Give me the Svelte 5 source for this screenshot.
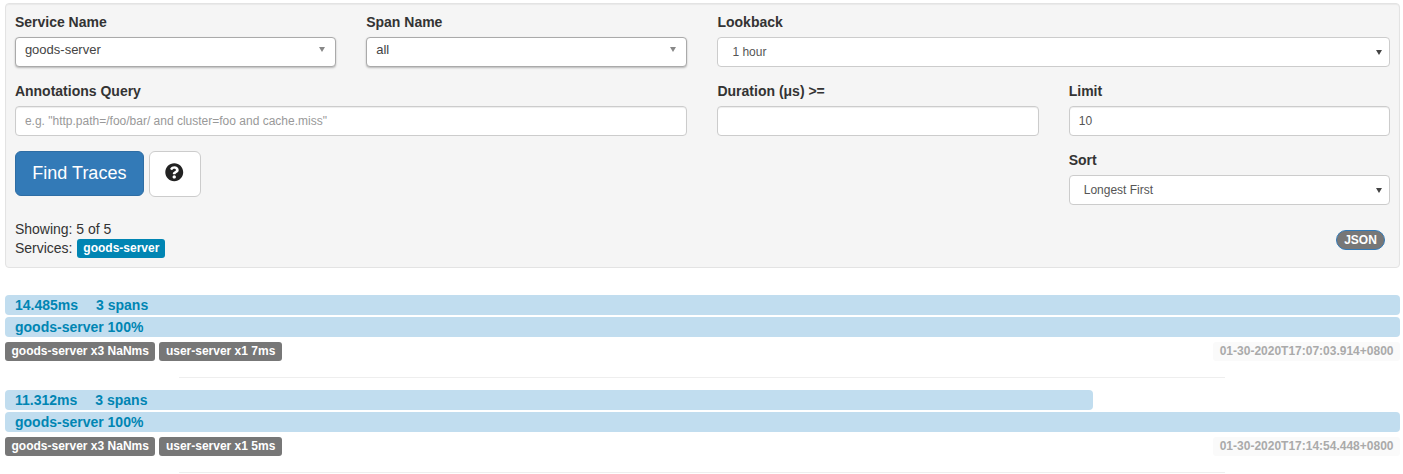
<script>
    const traces = [
        {
            duration: '14.485ms',
            spans: '3 spans',
            width: 100,
            services: ['goods-server x3 NaNms', 'user-server x1 7ms'],
            timestamp: '01-30-2020T17:07:03.914+0800'
        },
        {
            duration: '11.312ms',
            spans: '3 spans',
            width: 78,
            services: ['goods-server x3 NaNms', 'user-server x1 5ms'],
            timestamp: '01-30-2020T17:14:54.448+0800'
        }
    ];
</script>

<div class="page">
    <form class="well">
        <div class="grid">
            <div class="field">
                <span class="label">Service Name</span>
                <div class="chosen"><span>goods-server</span><i class="arrow light"></i></div>
            </div>
            <div class="field">
                <span class="label">Span Name</span>
                <div class="chosen"><span>all</span><i class="arrow light"></i></div>
            </div>
            <div class="field wide">
                <span class="label">Lookback</span>
                <div class="select"><span>1 hour</span><i class="arrow"></i></div>
            </div>

            <div class="field wide">
                <span class="label">Annotations Query</span>
                <input class="input" placeholder={'e.g. "http.path=/foo/bar/ and cluster=foo and cache.miss"'} />
            </div>
            <div class="field">
                <span class="label">Duration (μs) &gt;=</span>
                <input class="input" />
            </div>
            <div class="field">
                <span class="label">Limit</span>
                <input class="input" value="10" />
            </div>

            <div class="actions">
                <button type="button" class="find">Find Traces</button>
                <button type="button" class="help" aria-label="help">
                    <svg viewBox="0 0 512 512" width="18.5" height="18.5">
                        <path fill="#222" d="M504 256c0 136.997-111.043 248-248 248S8 392.997 8 256C8 119.083 119.043 8 256 8s248 111.083 248 248zM262.655 90c-54.497 0-89.255 22.957-116.549 63.758-3.536 5.286-2.353 12.415 2.715 16.258l34.699 26.31c5.205 3.947 12.621 3.008 16.665-2.122 17.864-22.658 30.113-35.797 57.303-35.797 20.429 0 45.698 13.148 45.698 32.958 0 14.976-12.363 22.667-32.534 33.976C247.128 238.528 216 254.941 216 296v4c0 6.627 5.373 12 12 12h56c6.627 0 12-5.373 12-12v-1.333c0-28.462 83.186-29.647 83.186-106.667 0-58.002-60.165-102-116.531-102zM256 338c-25.365 0-46 20.635-46 46 0 25.364 20.635 46 46 46s46-20.636 46-46c0-25.365-20.635-46-46-46z" />
                    </svg>
                </button>
            </div>
            <div class="field">
                <span class="label">Sort</span>
                <div class="select"><span>Longest First</span><i class="arrow"></i></div>
            </div>
        </div>

        <div class="summary">
            <div>
                <div class="line">Showing: 5 of 5</div>
                <div class="line">Services: <span class="service-tag">goods-server</span></div>
            </div>
            <span class="json">JSON</span>
        </div>
    </form>

    {#each traces as trace}
        <div class="trace">
            <div class="bar" style="width: {trace.width}%">
                <span class="duration">{trace.duration}</span><span>{trace.spans}</span>
            </div>
            <div class="bar">goods-server 100%</div>
            <div class="meta">
                <div class="tags">
                    {#each trace.services as service}
                        <span class="tag">{service}</span>
                    {/each}
                </div>
                <span class="timestamp">{trace.timestamp}</span>
            </div>
            <hr />
        </div>
    {/each}
</div>

<style>
    :global(body) {
        margin: 0;
        background: #fff;
        font-family: "Liberation Sans", Arial, sans-serif;
        font-size: 14px;
        color: #333;
    }

    .page {
        padding: 3px 3px 0 5px;
    }

    .well {
        box-sizing: border-box;
        height: 265px;
        padding: 8px 9px 0 8.9px;
        background: #f5f5f5;
        border: 1px solid #e3e3e3;
        border-radius: 4px;
        box-shadow: inset 0 1px 1px rgba(0, 0, 0, 0.05);
    }

    .grid {
        display: grid;
        grid-template-columns: repeat(4, 1fr);
        gap: 14px 30px;
    }

    .field {
        display: flex;
        flex-direction: column;
        gap: 5px;
    }

    .wide {
        grid-column: span 2;
    }

    .label {
        font-weight: 700;
        line-height: 20px;
    }

    .chosen,
    .select,
    .input {
        box-sizing: border-box;
        width: 100%;
        height: 30px;
        background: #fff;
        border: 1px solid #ccc;
        border-radius: 4px;
        font-family: inherit;
    }

    .chosen {
        display: flex;
        align-items: center;
        justify-content: space-between;
        padding: 0 10px 6px 9px;
        border-color: #aaa;
        box-shadow: 0 1px 2px rgba(0, 0, 0, 0.25);
        font-size: 13px;
        color: #444;
    }

    .select {
        display: flex;
        align-items: center;
        justify-content: space-between;
        padding: 0 7px 0 14px;
        font-size: 12px;
        color: #555;
    }

    .input {
        padding: 0 9px;
        font-size: 12px;
        color: #555;
        box-shadow: inset 0 1px 1px rgba(0, 0, 0, 0.075);
        outline: none;
    }

    .input::placeholder {
        color: #999;
    }

    .arrow {
        width: 0;
        height: 0;
        border-left: 3px solid transparent;
        border-right: 3px solid transparent;
        border-top: 5px solid #444;
    }

    .arrow.light {
        border-top-color: #888;
    }

    .actions {
        grid-column: span 3;
        display: flex;
        align-items: flex-start;
        gap: 5px;
        padding-top: 1px;
    }

    .find {
        width: 129px;
        height: 45px;
        background: #337ab7;
        border: 1px solid #2e6da4;
        border-radius: 6px;
        color: #fff;
        font-family: inherit;
        font-size: 18px;
    }

    .help {
        display: flex;
        align-items: center;
        justify-content: center;
        width: 52px;
        height: 46px;
        padding: 0 1px 3px 0;
        background: #fff;
        border: 1px solid #ccc;
        border-radius: 6px;
    }

    .summary {
        display: flex;
        align-items: center;
        justify-content: space-between;
        margin-top: 15px;
        padding-right: 5px;
    }

    .line {
        line-height: 19px;
    }

    .service-tag {
        display: inline-block;
        margin-left: 1px;
        padding: 0 6px;
        background: #0085b3;
        border-radius: 3px;
        color: #fff;
        font-size: 12px;
        font-weight: 700;
        line-height: 19px;
        vertical-align: top;
    }

    .json {
        box-sizing: border-box;
        width: 49px;
        height: 20px;
        margin-top: 2px;
        background: #777;
        border: 1px solid #337ab7;
        border-radius: 10px;
        color: #fff;
        font-size: 12px;
        font-weight: 700;
        line-height: 18px;
        text-align: center;
    }

    .trace {
        padding-top: 27px;
    }

    .trace + .trace {
        padding-top: 12px;
    }

    .bar {
        box-sizing: border-box;
        height: 20px;
        margin-bottom: 2px;
        padding-left: 10px;
        background: #c1ddef;
        border-radius: 4px;
        color: #0085b3;
        font-weight: 700;
        line-height: 20px;
    }

    .duration {
        margin-right: 18px;
    }

    .meta {
        display: flex;
        justify-content: space-between;
        margin-top: 5px;
    }

    .tags {
        display: flex;
        gap: 4px;
    }

    .tag,
    .timestamp {
        padding: 0 6.5px;
        border-radius: 3px;
        font-size: 12px;
        font-weight: 700;
        line-height: 19px;
    }

    .tag {
        background: #777;
        color: #fff;
    }

    .timestamp {
        background: #fafafa;
        color: #aaa;
    }

    hr {
        height: 1px;
        margin: 16px 175px 0 174px;
        background: #eee;
        border: 0;
    }
</style>
